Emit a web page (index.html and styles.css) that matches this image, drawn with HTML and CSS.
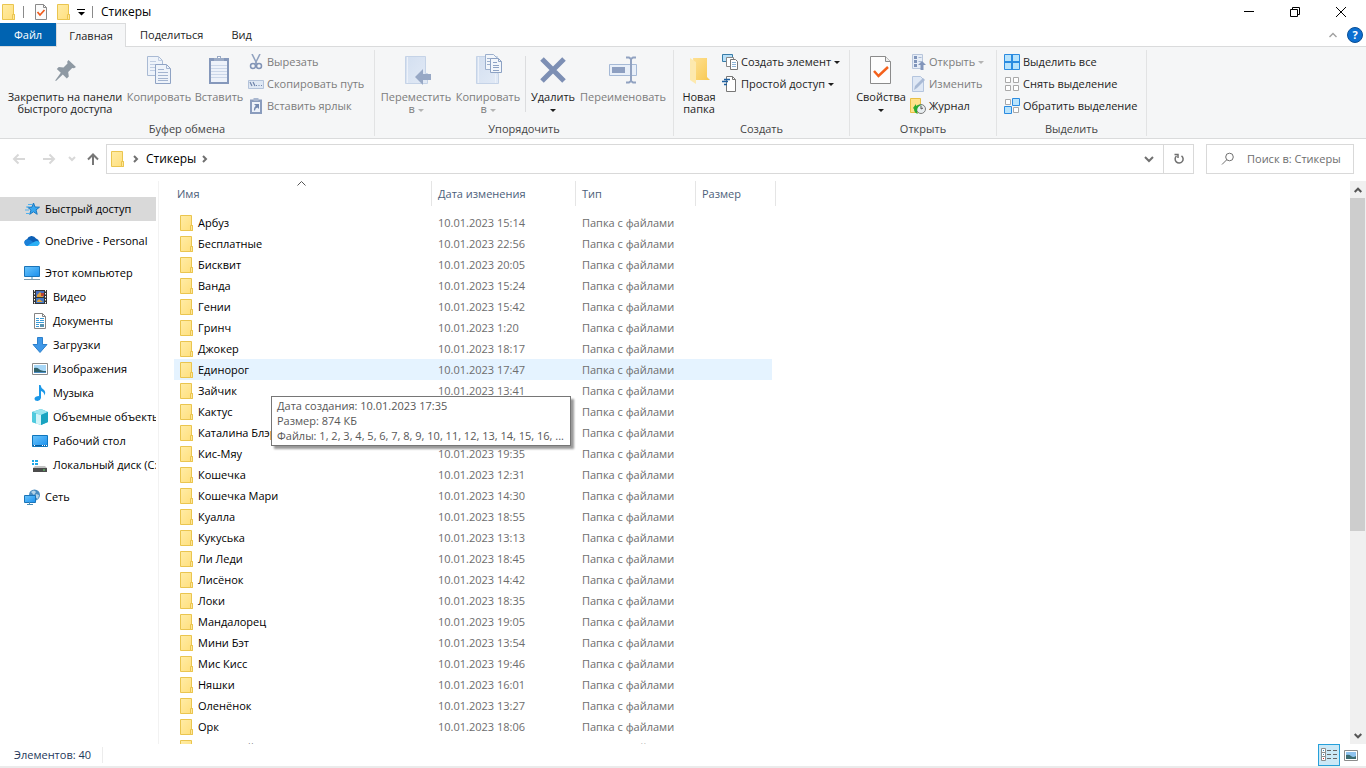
FILE: index.html
```html
<!DOCTYPE html>
<html lang="ru">
<head>
  <meta charset="UTF-8">
  <title>Стикеры</title>
  <link rel="stylesheet" href="styles.css">
</head>
<body>

  <!-- Shared icons -->
  <svg class="sprite" aria-hidden="true">
    <defs>
      <linearGradient id="gFolder" x1="0" y1="0" x2="1" y2="1"><stop offset="0" stop-color="#ffeca6"/><stop offset="1" stop-color="#ffdf7c"/></linearGradient>
      <linearGradient id="gPale" x1="0" y1="0" x2="1" y2="1"><stop offset="0" stop-color="#d3dff0"/><stop offset="1" stop-color="#e2eaf6"/></linearGradient>
      <linearGradient id="gBlue" x1="0" y1="0" x2="1" y2="1"><stop offset="0" stop-color="#6cc5fb"/><stop offset="1" stop-color="#1a90ee"/></linearGradient>
      <linearGradient id="gNewFolder" x1="0" y1="0" x2="1" y2="1"><stop offset="0" stop-color="#fee092"/><stop offset="1" stop-color="#f8c952"/></linearGradient>
    </defs>
    <symbol id="folder" viewBox="0 0 16 16">
      <path d="M2.500.5h11v10h1v5h-12z" fill="url(#gFolder)" stroke="#eac54f"/>
      <path d="M12.500 15.500v-5h2v5z" fill="#ffe69a" stroke="#eac54f"/>
    </symbol>
    <symbol id="doc-check" viewBox="0 0 16 16">
      <path d="M2.500.5h8l3 3v12h-11z" fill="#fbfbfb" stroke="#8a8a8a"/>
      <path d="M10.500.5v3h3" fill="none" stroke="#8a8a8a"/>
      <path d="M4.500 8l2.500 3 4.500-5" fill="none" stroke="#f05a1a" stroke-width="1.700"/>
    </symbol>
    <symbol id="sheets" viewBox="0 0 32 32">
      <path d="M4.500 2.500h11l4 4v15h-15z" fill="#eef3fa" stroke="#a9bad4"/>
      <path d="M15.500 2.500v4h4M7 7.500h6M7 10.500h10M7 13.500h10M7 16.500h10" fill="none" stroke="#c0cde2"/>
      <path d="M12.500 10.500h11l4 4v15h-15z" fill="#eef3fa" stroke="#8fa3c4"/>
      <path d="M23.500 10.500v4h4M15 15.500h6M15 18.500h10M15 21.500h10M15 24.500h10M15 26.500h10" fill="none" stroke="#a3b4d0"/>
    </symbol>
  </svg>

  <header class="titlebar">
    <svg class="icon"><use href="#folder"/></svg>
    <span class="title-sep"></span>
    <button class="quick" aria-label="Свойства"><svg class="icon"><use href="#doc-check"/></svg></button>
    <button class="quick" aria-label="Новая папка"><svg class="icon"><use href="#folder"/></svg></button>
    <button class="quick quick-menu" aria-label="Настройка панели">
      <svg width="8" height="8" viewBox="0 0 8 8"><path d="M0 1h8v1H0zM1 4h7L4.500 7.500z"/></svg>
    </button>
    <span class="title-sep"></span>
    <h1>Стикеры</h1>
    <div class="window-buttons">
      <button aria-label="Свернуть"><svg width="10" height="10" viewBox="0 0 10 10"><path d="M0 4.500h10"/></svg></button>
      <button aria-label="Свернуть в окно"><svg width="10" height="10" viewBox="0 0 10 10"><path d="M.5 2.500h7v7h-7zM2.500 2.500v-2h7v7h-2"/></svg></button>
      <button aria-label="Закрыть"><svg width="10" height="10" viewBox="0 0 10 10"><path d="M0 0l10 10M10 0L0 10"/></svg></button>
    </div>
  </header>

  <nav class="tabs">
    <button class="tab tab-file">Файл</button>
    <button class="tab tab-active">Главная</button>
    <button class="tab">Поделиться</button>
    <button class="tab">Вид</button>
    <div class="tabs-right">
      <button aria-label="Свернуть ленту"><svg width="8" height="6" viewBox="0 0 8 6"><path d="M.5 5L4 1.500 7.500 5" fill="none" stroke="#a0a0a0" stroke-width="1.400"/></svg></button>
      <button class="help" aria-label="Справка">?</button>
    </div>
  </nav>

  <section class="ribbon">
    <div class="group group-clipboard">
      <div class="group-body">
        <button class="big big-pin">
          <svg viewBox="0 0 32 32"><path d="M19.500 6l7.500 7-2 1.300-1.800-.3-4 4 .6 4.500-2 2-4-4L7 27l-.8-.6 5.600-7.600-4-3.800 2-2 4.700.6 4-4-.3-1.800z" fill="#8e99a3"/></svg>
          <span>Закрепить на панели<br>быстрого доступа</span>
        </button>
        <button class="big big-copy" disabled>
          <svg viewBox="0 0 32 32"><use href="#sheets"/></svg>
          <span>Копировать</span>
        </button>
        <button class="big big-paste" disabled>
          <svg viewBox="0 0 32 32"><path d="M6 4h20v26H6z" fill="#8598bb"/><path d="M8 7h16v21H8z" fill="#edf2fa"/><path d="M8 11.500h16M8 14.500h16M8 17.500h16M8 20.500h16M8 23.500h16" stroke="#cbd7e9"/><path d="M11 7V4h3V2h4v2h3v3z" fill="#9babc6"/><path d="M15 3h2v1h-2z" fill="#fff"/></svg>
          <span>Вставить</span>
        </button>
        <div class="small-col">
          <button class="small" disabled><svg class="icon" viewBox="0 0 16 16"><path d="M4 0l5 10M12 0L7 10" stroke="#92a3c0" stroke-width="1.600"/><circle cx="5" cy="12" r="2.500" fill="none" stroke="#8193b5" stroke-width="1.500"/><circle cx="11" cy="12" r="2.500" fill="none" stroke="#8193b5" stroke-width="1.500"/></svg><span>Вырезать</span></button>
          <button class="small" disabled><svg class="icon" viewBox="0 0 16 16"><path d="M.5 4.500h15v8H.5z" fill="#dfe8f4" stroke="#b4c3da"/><path d="M2 6l2 4M5 6l2 4M8 9.500h1M10.500 9.500h1M13 9.500h1" stroke="#6f84ab" stroke-width="1.200"/></svg><span>Скопировать путь</span></button>
          <button class="small" disabled><svg class="icon" viewBox="0 0 16 16"><path d="M2 1.500h12V16H2z" fill="#8a9cbd"/><path d="M4 4h8v10H4z" fill="#edf2fa"/><path d="M5.500 0h5v3h-5z" fill="#a9b7cf"/><path d="M6 6h5v5L9.500 9.500Q7 10 7 12.500H6Q5.500 10 7.800 7.800z" fill="#7288af"/></svg><span>Вставить ярлык</span></button>
        </div>
      </div>
      <div class="group-name">Буфер обмена</div>
    </div>

    <div class="group group-organize">
      <div class="group-body">
        <button class="big big-move" disabled>
          <svg viewBox="0 0 32 32"><path d="M5.500 2.500h20v17h2v10h-22z" fill="url(#gPale)" stroke="#c5d3e7"/><path d="M7.500 3v26" stroke="#ecf1f9"/><path d="M15 23l8-8v5h8v6h-8v5z" fill="#97a8c5"/></svg>
          <span>Переместить<br>в <i class="arrow"></i></span>
        </button>
        <button class="big big-copyto" disabled>
          <svg viewBox="0 0 32 32"><path d="M4.500 2.500h21v17h1v10h-22z" fill="url(#gPale)" stroke="#c5d3e7"/><path d="M6.500 3v26M23.500 20v9" stroke="#ecf1f9"/><path d="M13.500.5h8l3 3v12h-11z" fill="#f2f6fb" stroke="#9bafcd"/><path d="M15 4.500h5M15 7.500h7M15 10.500h7" stroke="#9bafcd"/><path d="M18.500 4.500h8l3 3v11h-11z" fill="#f2f6fb" stroke="#8da2c4"/><path d="M26.500 4.500v3h3M21 8.500h4M21 11.500h6M21 13.500h6M21 16.500h6" fill="none" stroke="#8da2c4"/></svg>
          <span>Копировать<br>в <i class="arrow"></i></span>
        </button>
        <div class="inner-sep"></div>
        <button class="big big-delete">
          <svg viewBox="0 0 32 32"><path d="M5 5l22 22M27 5L5 27" stroke="#7d8fb4" stroke-width="5"/></svg>
          <span>Удалить<br><i class="arrow"></i></span>
        </button>
        <button class="big big-rename" disabled>
          <svg viewBox="0 0 32 32"><path d="M2.500 10.500h27v11h-27z" fill="#e8eff9" stroke="#a5b9d6"/><path d="M5 13h13v6H5z" fill="#8d9fc1"/><path d="M19 3.500h3l2 1.500 2-1.500h3M19 28.500h3l2-1.500 2 1.500h3M24 4v24" fill="none" stroke="#91a2c1" stroke-width="2"/></svg>
          <span>Переименовать</span>
        </button>
      </div>
      <div class="group-name">Упорядочить</div>
    </div>

    <div class="group group-new">
      <div class="group-body">
        <button class="big big-folder">
          <svg viewBox="0 0 32 32"><path d="M10 4h14v19l3 3H12z" fill="url(#gNewFolder)"/><path d="M7 4l6 4v22l-6-4z" fill="#fde9ae"/></svg>
          <span>Новая<br>папка</span>
        </button>
        <div class="small-col">
          <button class="small"><svg class="icon" viewBox="0 0 16 16"><path d="M.5.5h10v7H.5z" fill="#b9e0f8" stroke="#387ca8"/><path d="M4.500 3.500h7v9h-7z" fill="#fff" stroke="#888"/><path d="M8.500 5.500h5l2 2v8h-7z" fill="#fff" stroke="#777"/><path d="M10 8.500h4M10 10.500h4M10 12.500h4" stroke="#8eb4d6"/></svg><span>Создать элемент</span><i class="arrow"></i></button>
          <button class="small"><svg class="icon" viewBox="0 0 16 16"><path d="M4.500.5h6l3 3v12h-9z" fill="#fff" stroke="#777"/><path d="M10.500.5v3h3" fill="none" stroke="#777"/><path d="M2 3.500h6M0 5.500h6M2 8.500h3" stroke="#1e5f9f" stroke-width="1.400"/></svg><span>Простой доступ</span><i class="arrow"></i></button>
        </div>
      </div>
      <div class="group-name">Создать</div>
    </div>

    <div class="group group-open">
      <div class="group-body">
        <button class="big big-props">
          <svg viewBox="0 0 32 32"><path d="M5.500 2.500h15l5 5v22h-20z" fill="#fdfdfd" stroke="#8b8b8b"/><path d="M20.500 2.500v5h5" fill="#eee" stroke="#8b8b8b"/><path d="M9 17l4.500 5L23 13" fill="none" stroke="#f4611c" stroke-width="2.500"/></svg>
          <span>Свойства<br><i class="arrow"></i></span>
        </button>
        <div class="small-col">
          <button class="small" disabled><svg class="icon" viewBox="0 0 16 16"><path d="M2.500.5h10v14h-10z" fill="#e6edf7" stroke="#b8c6dc"/><path d="M4 2h3v3H4zM4 6h3v3H4zM4 10h3v3H4z" fill="#7f94ba"/><path d="M8.500 3.500h3M8.500 7.500h3" stroke="#a9b9d2"/><path d="M12 7l4 4h-2.500v5h-3v-5H8z" fill="#8295ba"/></svg><span>Открыть</span><i class="arrow"></i></button>
          <button class="small" disabled><svg class="icon" viewBox="0 0 16 16"><path d="M2.500.5h8l3 3v12h-11z" fill="#dfe8f5" stroke="#b4c5de"/><path d="M4 14l1-4 8-8 2 2-8 8z" fill="#a9bad5"/></svg><span>Изменить</span></button>
          <button class="small"><svg class="icon" viewBox="0 0 16 16"><path d="M.5.5h10v14H.5z" fill="#ffe28a" stroke="#e8bf45"/><circle cx="11" cy="11" r="4.500" fill="#e8edf0" stroke="#7c7c7c"/><path d="M11 8v3l2-1" fill="none" stroke="#555"/><path d="M3 10l3-4v2q3-2 6-1-5 1-5 6 0 2 1 3-4-1-4-5z" fill="#2cab31"/></svg><span>Журнал</span></button>
        </div>
      </div>
      <div class="group-name">Открыть</div>
    </div>

    <div class="group group-select">
      <div class="group-body">
        <div class="small-col">
          <button class="small"><svg class="icon" viewBox="0 0 16 16"><path d="M.5.5h15v15H.5z" fill="#b8e3fc" stroke="#2b8be0"/><path d="M8 0v16M0 8h16" stroke="#2b8be0" stroke-width="2"/></svg><span>Выделить все</span></button>
          <button class="small"><svg class="icon" viewBox="0 0 16 16"><path d="M1.500 1.500h5v5h-5zM9.500 1.500h5v5h-5zM1.500 9.500h5v5h-5zM9.500 9.500h5v5h-5z" fill="#fff" stroke="#a9a9a9"/></svg><span>Снять выделение</span></button>
          <button class="small"><svg class="icon" viewBox="0 0 16 16"><path d="M1.500 1.500h5v5h-5zM9.500 9.500h5v5h-5z" fill="#fff" stroke="#a9a9a9"/><path d="M8.500.5h7v7h-7zM.5 8.500h7v7h-7z" fill="#b8e3fc" stroke="#2b8be0"/></svg><span>Обратить выделение</span></button>
        </div>
      </div>
      <div class="group-name">Выделить</div>
    </div>
  </section>

  <div class="navbar">
    <div class="nav-buttons">
      <button aria-label="Назад" disabled><svg width="14" height="12" viewBox="0 0 14 12"><path d="M13 6H2M6.500 1.500L2 6l4.500 4.500"/></svg></button>
      <button aria-label="Вперед" disabled><svg width="14" height="12" viewBox="0 0 14 12"><path d="M1 6h11M7.500 1.500L12 6l-4.500 4.500"/></svg></button>
      <button class="nav-recent" aria-label="Последние расположения" disabled><svg width="8" height="6" viewBox="0 0 8 6"><path d="M1 1l3 3 3-3"/></svg></button>
      <button class="nav-up" aria-label="Вверх"><svg width="14" height="14" viewBox="0 0 14 14"><path d="M7 13V2.500M2 7.500l5-5 5 5"/></svg></button>
    </div>
    <div class="address">
      <svg class="icon"><use href="#folder"/></svg>
      <svg class="crumb-arrow" width="6" height="8" viewBox="0 0 6 8"><path d="M1 1l3 3-3 3"/></svg>
      <a class="crumb" href="#">Стикеры</a>
      <svg class="crumb-arrow" width="6" height="8" viewBox="0 0 6 8"><path d="M1 1l3 3-3 3"/></svg>
      <button class="address-drop" aria-label="Предыдущие расположения"><svg width="10" height="8" viewBox="0 0 10 8"><path d="M1 2l4 4 4-4"/></svg></button>
      <button class="address-refresh" aria-label="Обновить"><svg width="12" height="12" viewBox="0 0 12 12"><path d="M8.500 2.800A4 4 0 1 1 3.500 3M1.500 1.500H5V5"/></svg></button>
    </div>
    <div class="search">
      <svg width="14" height="14" viewBox="0 0 14 14"><circle cx="8.500" cy="5" r="3.800"/><path d="M5.800 7.700L1 12.500"/></svg>
      <input type="text" aria-label="Поиск" placeholder="Поиск в: Стикеры">
    </div>
  </div>

  <main class="content">
    <nav class="sidebar">
      <a class="side-item side-current" href="#"><svg class="icon" viewBox="0 0 16 16"><path d="M9.500 2l1.500 4 4.500.2-3.500 2.700 1.200 4.400-3.700-2.500L5.700 13.300l1.300-4.200-3.300-2.800 4.300-.2z" fill="#39a6ee" stroke="#1878c2"/><path d="M4 3.500h4M2 6h3M1 9h4M2 12.500h4" stroke="#4fb1ef"/></svg><span>Быстрый доступ</span></a>
      <a class="side-item side-top" href="#"><svg class="icon" viewBox="0 0 16 16"><path d="M3.500 13A3.500 3.500 0 0 1 3 6.200 5 5 0 0 1 12 5.500 4 4 0 0 1 13 13z" fill="#0c5fb5"/><path d="M3.500 13A3.500 3.500 0 0 1 1 7.500q3-2 6 0l6.500 5.300z" fill="#1a80d8"/><path d="M3 13l7-4q3-2 5.500 0A3 3 0 0 1 13 13z" fill="#2bb0f5"/></svg><span>OneDrive - Personal</span></a>
      <a class="side-item side-top" href="#"><svg class="icon" viewBox="0 0 16 16"><path d="M.5 1.500h15v10H.5z" fill="url(#gBlue)" stroke="#1b74b8"/><path d="M7 12h2v2H7z" fill="#9ec5dd"/><path d="M0 14.500h16" stroke="#7f9bac"/></svg><span>Этот компьютер</span></a>
      <a class="side-item side-sub" href="#"><svg class="icon" viewBox="0 0 16 16"><path d="M1 1h14v14H1z" fill="#353535"/><path d="M4 2h8v6H4z" fill="#486fc0"/><path d="M4 9h8v5H4z" fill="#4378c5"/><path d="M5 6l3-3 3 3v2H5zM5 12l2-2 4 3H5z" fill="#e0a33d"/><path d="M9 4h3v3H9z" fill="#bc4334"/><path d="M2.500 1v14M13.500 1v14" stroke="#fff" stroke-dasharray="1.500 1.500"/></svg><span>Видео</span></a>
      <a class="side-item side-sub" href="#"><svg class="icon" viewBox="0 0 16 16"><path d="M2.500.5h8l3 3v12h-11z" fill="#fff" stroke="#848484"/><path d="M10.500.5v3h3" fill="none" stroke="#848484"/><path d="M4 5.500h3M8 5.500h4M4 7.500h3M8 7.500h4M4 9.500h8M4 11.500h3M4 13.500h3" stroke="#3c9bd6"/><path d="M8 11h4v3H8z" fill="#5a93b0"/></svg><span>Документы</span></a>
      <a class="side-item side-sub" href="#"><svg class="icon" viewBox="0 0 16 16"><path d="M5.500.5h5v7h4.500L8 15.500 1 7.500h4.500z" fill="#3f98e8" stroke="#2c80cc"/></svg><span>Загрузки</span></a>
      <a class="side-item side-sub" href="#"><svg class="icon" viewBox="0 0 16 16"><path d="M.5 2.500h15v11H.5z" fill="#fff" stroke="#8b8b8b"/><path d="M2 4h12v8H2z" fill="#a7d7f7"/><path d="M2 7q3-1 5 1t7 2v1H2z" fill="#31626b"/><path d="M2 11h12v1H2z" fill="#4f8fc5"/></svg><span>Изображения</span></a>
      <a class="side-item side-sub" href="#"><svg class="icon" viewBox="0 0 16 16"><path d="M7 0h1.500q.5 3 3 4.500 3 2.500.8 6 .2-3.500-3.300-4.500V13q-.5 2.500-3.300 3Q2.500 16 2.500 13.500 3 11 7 11z" fill="#1b98e8"/></svg><span>Музыка</span></a>
      <a class="side-item side-sub" href="#"><svg class="icon" viewBox="0 0 16 16"><path d="M0 3l9-3 7 3v10l-7 3-9-3z" fill="#38b9d2"/><path d="M0 3l9-3 7 3-7 3z" fill="#9be5ef"/><path d="M0 3l4 1.500v10L0 13z" fill="#4fcade"/><path d="M4 4.500L9 6v10l-5-1.500z" fill="#d3f4f8"/><path d="M9 6l7-3v10l-7 3z" fill="#1aa3c0"/></svg><span>Объемные объекты</span></a>
      <a class="side-item side-sub" href="#"><svg class="icon" viewBox="0 0 16 16"><path d="M.5 2.500h15v11H.5z" fill="url(#gBlue)" stroke="#0f76bd"/><path d="M1 12.500h14" stroke="#0b5c9c"/><path d="M2 12.500h1M10 12.500h1M12 12.500h1M14 12.500h1" stroke="#fff"/></svg><span>Рабочий стол</span></a>
      <a class="side-item side-sub" href="#"><svg class="icon" viewBox="0 0 16 16"><path d="M0 3h2v2H0zM3 3h3v2H3zM0 6h2v2H0zM3 6h3v2H3z" fill="#1fa8e8"/><path d="M3 9h10l2 2H1z" fill="#c2c2c2"/><path d="M1 11h14v4H1z" fill="#4c4c4c"/><path d="M11 13h2" stroke="#5fe06a"/></svg><span>Локальный диск (C:)</span></a>
      <a class="side-item side-top" href="#"><svg class="icon" viewBox="0 0 16 16"><circle cx="10.500" cy="6" r="5.500" fill="#4a8cc0"/><path d="M7 3q3-3 5 0l-2 3zM12 5l3 1-1 4-3-2z" fill="#b5d3e6"/><path d="M.5 6.500h11v7H.5z" fill="url(#gBlue)" stroke="#1b74b8"/><path d="M5.500 13v2.500M3 15.500h6" stroke="#4a8cb5"/></svg><span>Сеть</span></a>
    </nav>

    <div class="files">
      <table>
        <thead>
          <tr>
            <th class="col-name sorted" scope="col">Имя<svg width="9" height="5" viewBox="0 0 9 5"><path d="M.5 4.500l4-4 4 4" fill="none" stroke="#555"/></svg></th>
            <th class="col-date" scope="col">Дата изменения</th>
            <th class="col-type" scope="col">Тип</th>
            <th class="col-size" scope="col">Размер</th>
          </tr>
        </thead>
        <tbody id="rows"></tbody>
      </table>
    </div>

    <div class="scrollbar">
      <button aria-label="Вверх"><svg width="8" height="6" viewBox="0 0 8 6"><path d="M.7 5L4 1.700 7.300 5"/></svg></button>
      <div class="track"><div class="thumb"></div></div>
      <button aria-label="Вниз"><svg width="8" height="6" viewBox="0 0 8 6"><path d="M.7 1L4 4.300 7.300 1"/></svg></button>
    </div>
  </main>

  <footer class="status">
    <span class="status-count">Элементов: 40</span>
    <div class="view-buttons">
      <button class="view-active" aria-label="Таблица"><svg width="16" height="14" viewBox="0 0 16 14"><path d="M.5.5h4v4h-4zM.5 4.500h4v4h-4zM.5 8.500h4v4h-4z" fill="#fff" stroke="#8c8c8c"/><path d="M2 2h1v1H2zM2 6h1v1H2z" fill="#4989b5"/><path d="M2 10h1v1H2z" fill="#d22"/><path d="M6 2.500h4M12 2.500h4M6 6.500h4M12 6.500h4M6 10.500h4M12 10.500h4" stroke="#666"/></svg></button>
      <button aria-label="Крупные значки"><svg width="14" height="11" viewBox="0 0 14 11"><path d="M.5.5h13v10H.5z" fill="#fff" stroke="#8c8c8c"/><path d="M2 2h10v7H2z" fill="#8fc3ef"/><path d="M2 5q3-1 5 1t5 0v3H2z" fill="#3d6c72"/></svg></button>
    </div>
  </footer>

  <div class="tooltip" role="tooltip">
    Дата создания: 10.01.2023 17:35<br>
    Размер: 874 КБ<br>
    Файлы: 1, 2, 3, 4, 5, 6, 7, 8, 9, 10, 11, 12, 13, 14, 15, 16, ...
  </div>

  <script>
    const folders = [
      ['Арбуз', '15:14'],
      ['Бесплатные', '22:56'],
      ['Бисквит', '20:05'],
      ['Ванда', '15:24'],
      ['Гении', '15:42'],
      ['Гринч', '1:20'],
      ['Джокер', '18:17'],
      ['Единорог', '17:47'],
      ['Зайчик', '13:41'],
      ['Кактус', '17:22'],
      ['Каталина Блэр', '18:22'],
      ['Кис-Мяу', '19:35'],
      ['Кошечка', '12:31'],
      ['Кошечка Мари', '14:30'],
      ['Куалла', '18:55'],
      ['Кукуська', '13:13'],
      ['Ли Леди', '18:45'],
      ['Лисёнок', '14:42'],
      ['Локи', '18:35'],
      ['Мандалорец', '19:05'],
      ['Мини Бэт', '13:54'],
      ['Мис Кисс', '19:46'],
      ['Няшки', '16:01'],
      ['Оленёнок', '13:27'],
      ['Орк', '18:06'],
      ['Пушистый', '18:17']
    ];

    const rows = document.getElementById('rows');

    folders.forEach(([name, time]) => {
      const row = document.createElement('tr');
      if (name === 'Единорог') {
        row.classList.add('hovered');
      }
      row.innerHTML = `
        <td><span class="name"><svg class="icon"><use href="#folder"/></svg>${name}</span></td>
        <td>10.01.2023 ${time}</td>
        <td>Папка с файлами</td>
        <td></td>`;
      rows.appendChild(row);
    });
  </script>
</body>
</html>
```
FILE: styles.css
```css
* {
  margin: 0;
  padding: 0;
  box-sizing: border-box;
}

:root {
  --ribbon-bg: #f5f6f7;
  --line: #dadbdc;
  --blue: #0063b1;
  --text: #1e1e1e;
  --muted: #6d6d6d;
  --header: #4c607a;
}

body {
  display: flex;
  flex-direction: column;
  height: 100vh;
  overflow: hidden;
  background: white;
  color: black;
  font-family: 'Open Sans', 'Noto Sans', sans-serif;
  font-size: 11px;
  line-height: 16px;
}

button {
  background: none;
  border: none;
  color: inherit;
  font: inherit;
}

a {
  color: inherit;
  text-decoration: none;
}

svg {
  display: block;
  flex: none;
}

.icon {
  width: 16px;
  height: 16px;
}

.sprite {
  position: absolute;
  width: 0;
  height: 0;
}

/* Title bar */
.titlebar {
  display: flex;
  align-items: center;
  flex: none;
  height: 23px;
}

.title-sep {
  width: 1px;
  height: 12px;
  margin: 0 7px;
  background: #8a8a8a;
}

.quick {
  margin-left: 2px;
  margin-right: 4px;
}

.quick-menu {
  margin: 0 0 0 2px;
}

.titlebar h1 {
  padding-left: 1px;
  font-size: 12px;
  font-weight: normal;
}

.window-buttons {
  display: flex;
  margin-left: auto;
}

.window-buttons button {
  display: grid;
  place-items: center;
  width: 46px;
  height: 22px;
}

.window-buttons path {
  fill: none;
  stroke: black;
}

.window-buttons {
  padding-right: 2px;
}

/* Tabs */
.tabs {
  display: flex;
  flex: none;
  height: 24px;
  border-bottom: 1px solid var(--line);
}

.tab {
  height: 23px;
  padding: 0 14px;
  color: var(--text);
}

.tab-file {
  width: 56px;
  background: var(--blue);
  color: white;
}

.tab-active {
  width: 70px;
  height: 24px;
  padding: 0;
  background: var(--ribbon-bg);
  border: 1px solid var(--line);
  border-bottom: none;
}

.tabs-right {
  display: flex;
  align-items: center;
  gap: 10px;
  margin-left: auto;
  padding-right: 3px;
}

.help {
  width: 16px;
  height: 16px;
  border: 1px solid #0a4f96;
  border-radius: 50%;
  background: #0c6fd1;
  color: white;
  font-weight: bold;
  line-height: 14px;
}

/* Ribbon */
.ribbon {
  display: flex;
  flex: none;
  height: 92px;
  padding: 3px 0 2px;
  background: var(--ribbon-bg);
  border-bottom: 1px solid var(--line);
  color: var(--text);
}

.group {
  display: flex;
  flex-direction: column;
  flex: none;
  border-right: 1px solid #e2e3e4;
}

.group-clipboard { width: 375px; }
.group-organize { width: 299px; }
.group-new { width: 176px; }
.group-open { width: 147px; }
.group-select { width: 150px; }

.group-body {
  display: flex;
  flex: 1;
  padding-left: 4px;
}

.group-name {
  color: #444;
  text-align: center;
  line-height: 14px;
}

.big {
  display: flex;
  flex-direction: column;
  align-items: center;
  gap: 5px;
  padding-top: 4px;
  line-height: 12px;
  white-space: nowrap;
}

.big svg {
  width: 32px;
  height: 32px;
}

.big:disabled,
.small:disabled {
  color: #7c7c7c;
}

.big-pin { width: 122px; }
.big-copy { width: 66px; }
.big-paste { width: 54px; }
.big-move { width: 74px; }
.big-copyto { width: 70px; }
.big-delete { width: 50px; }
.big-rename { width: 90px; }
.big-folder { width: 42px; }
.big-props { width: 54px; }

.inner-sep {
  width: 1px;
  height: 56px;
  margin: 6px 2px 0;
  background: #dcdddf;
}

.arrow {
  display: inline-block;
  width: 0;
  border: 3px solid transparent;
  border-top-color: currentColor;
  border-bottom: none;
  vertical-align: middle;
}

button:disabled .arrow {
  border-top-color: #b4b4b4;
}

.small-col {
  display: flex;
  flex-direction: column;
  padding: 1px 0 0 2px;
}

.small {
  display: flex;
  align-items: center;
  gap: 3px;
  height: 22px;
  white-space: nowrap;
}

.group-select .small-col {
  padding-left: 3px;
}

/* Navigation row */
.navbar {
  display: flex;
  flex: none;
  gap: 12px;
  height: 42px;
  padding: 5px 12px 7px;
}

.nav-buttons {
  display: flex;
  align-items: center;
  gap: 16px;
  width: 82px;
}

.nav-buttons path {
  fill: none;
  stroke: #777;
  stroke-width: 2;
}

.nav-buttons button:disabled path {
  stroke: #d8d8d8;
}

.nav-recent {
  margin-left: -4px;
}

.nav-up {
  margin-left: -6px;
}

.address {
  display: flex;
  align-items: center;
  flex: 1;
  padding-left: 2px;
  border: 1px solid #d9d9d9;
  font-size: 12px;
}

.address path,
.search svg {
  fill: none;
  stroke: #707070;
}

.address .address-drop path {
  stroke-width: 2;
}

.address .address-refresh path {
  stroke-width: 1.5;
}

.address > .crumb-arrow {
  margin: 0 7px 0 8px;
}

.crumb-arrow path {
  stroke-width: 2;
}

.address > .crumb + .crumb-arrow {
  margin-left: 6px;
}

.address-drop {
  display: grid;
  place-items: center;
  width: 28px;
  height: 28px;
  margin-left: auto;
}

.address-refresh {
  display: grid;
  place-items: center;
  width: 30px;
  height: 28px;
  border-left: 1px solid #d9d9d9;
}

.search {
  display: flex;
  align-items: center;
  gap: 12px;
  width: 148px;
  padding-left: 14px;
  border: 1px solid #d9d9d9;
}

.search input {
  flex: 1;
  min-width: 0;
  border: none;
  outline: none;
  font: inherit;
}

.search input::placeholder {
  color: var(--muted);
}

/* Content */
.content {
  display: flex;
  flex: 1;
  min-height: 0;
}

.sidebar {
  flex: none;
  width: 159px;
  padding: 16px 2px 0 0;
  border-right: 1px solid #f2f2f2;
}

.side-item {
  display: flex;
  align-items: center;
  gap: 5px;
  height: 24px;
  padding-left: 24px;
  overflow: hidden;
  white-space: nowrap;
}

.side-item:hover,
.side-current {
  background: #d9d9d9;
}

.side-top {
  margin-top: 8px;
}

.side-sub {
  padding-left: 32px;
}

.files {
  flex: 1;
  padding-left: 15px;
  overflow: hidden;
}

table {
  width: 602px;
  border-spacing: 0;
  table-layout: fixed;
}

th {
  position: relative;
  height: 25px;
  padding-left: 6px;
  border-right: 1px solid #e5e5e5;
  color: var(--header);
  font-weight: normal;
  text-align: left;
}

.col-name { width: 258px; padding-left: 3px; }
.col-date { width: 144px; }
.col-type { width: 120px; }
.col-size { width: 80px; }

.sorted svg {
  position: absolute;
  top: 0;
  left: 48%;
}

/* Gap between the header and the first row */
tbody::before {
  content: '';
  display: block;
  height: 6px;
}

td {
  height: 21px;
  padding-left: 6px;
  color: var(--muted);
  white-space: nowrap;
}

td:first-child {
  padding-left: 4px;
}

/* The row highlight stops a little before the last column edge */
td:last-child {
  padding: 0 4px 0 0;
  background-clip: content-box;
}

.name {
  display: flex;
  align-items: center;
  gap: 4px;
  height: 20px;
  color: black;
}

tr.hovered td {
  background-color: #e5f3ff;
}

/* Scrollbar */
.scrollbar {
  display: flex;
  flex-direction: column;
  flex: none;
  width: 16px;
  background: #f0f0f0;
}

.scrollbar button {
  display: grid;
  place-items: center;
  height: 17px;
}

.scrollbar path {
  fill: none;
  stroke: #555;
  stroke-width: 2;
}

.track {
  flex: 1;
}

.thumb {
  width: 15px;
  height: 63%;
  background: #cdcdcd;
}

/* Status bar */
.status {
  display: flex;
  align-items: center;
  flex: none;
  height: 24px;
  padding-left: 14px;
  border-bottom: 2px solid #ebebeb;
}

.status-count {
  padding-right: 11px;
  border-right: 1px solid #ececec;
  color: #1e395b;
}

.view-buttons {
  display: flex;
  margin-left: auto;
  padding-right: 4px;
}

.view-buttons button {
  display: grid;
  place-items: center;
  width: 22px;
  height: 22px;
}

.view-buttons .view-active {
  border: 1px solid #26a0da;
  background: #cbe8f6;
}

/* Tooltip */
.tooltip {
  position: absolute;
  top: 396px;
  left: 271px;
  width: 300px;
  padding: 1px 5px 2px;
  border: 1px solid #767676;
  background: white;
  box-shadow: 3px 3px 2px rgba(0, 0, 0, 0.4);
  color: #575757;
  line-height: 15px;
  white-space: nowrap;
}
```
